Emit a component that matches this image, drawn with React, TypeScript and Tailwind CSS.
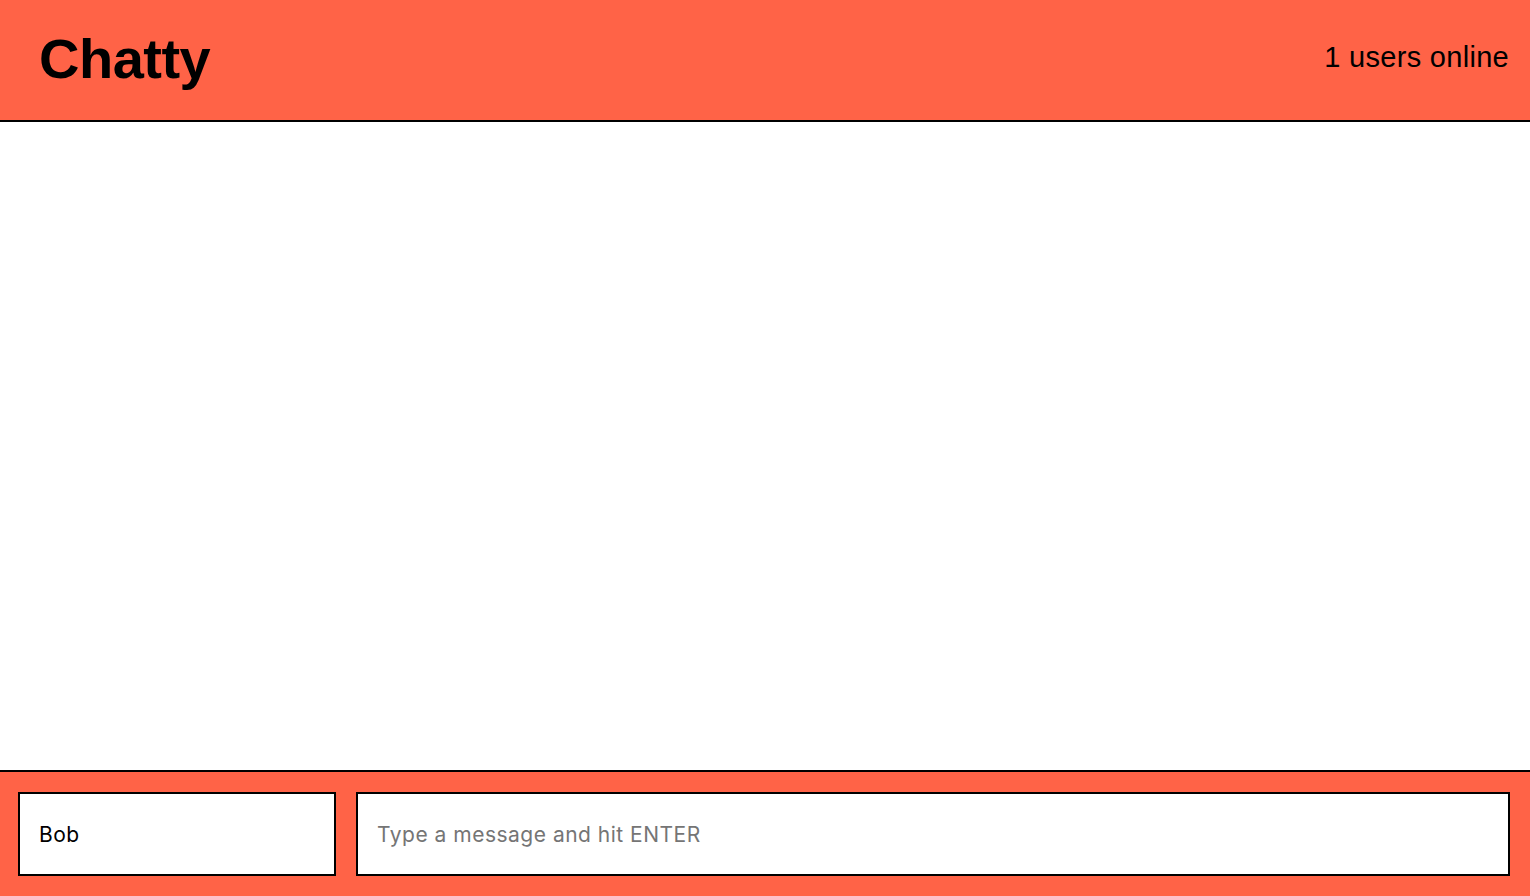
import React from 'react';

const font = { fontFamily: '"Liberation Sans", Arial, sans-serif' };
const inputFont = { fontFamily: 'Inter, "Liberation Sans", sans-serif' };

export default function App() {
  return (
    <div className="flex h-[896px] w-full flex-col bg-white text-black" style={font}>
      <nav className="flex h-[122px] shrink-0 items-center justify-between border-b-2 border-black bg-[#ff6347] pl-[39px] pr-[21px]">
        <h1 className="pb-[3px] text-[56px] font-bold leading-none tracking-[-0.5px]">Chatty</h1>
        <span className="pb-[5px] text-[29px] leading-none tracking-[0.3px]">1 users online</span>
      </nav>
      <main className="flex-1"></main>
      <footer className="flex h-[126px] shrink-0 items-center gap-[20px] border-t-2 border-black bg-[#ff6347] pl-[18px] pr-[20px]">
        <input
          className="h-[84px] w-[318px] border-2 border-black bg-white px-[19px] text-[21px] tracking-[0.4px] outline-none"
          style={inputFont}
          defaultValue="Bob"
        />
        <input
          className="h-[84px] flex-1 border-2 border-black bg-white px-[19px] text-[21px] tracking-[0.5px] outline-none placeholder:text-[#757575]"
          style={inputFont}
          placeholder="Type a message and hit ENTER"
        />
      </footer>
    </div>
  );
}
